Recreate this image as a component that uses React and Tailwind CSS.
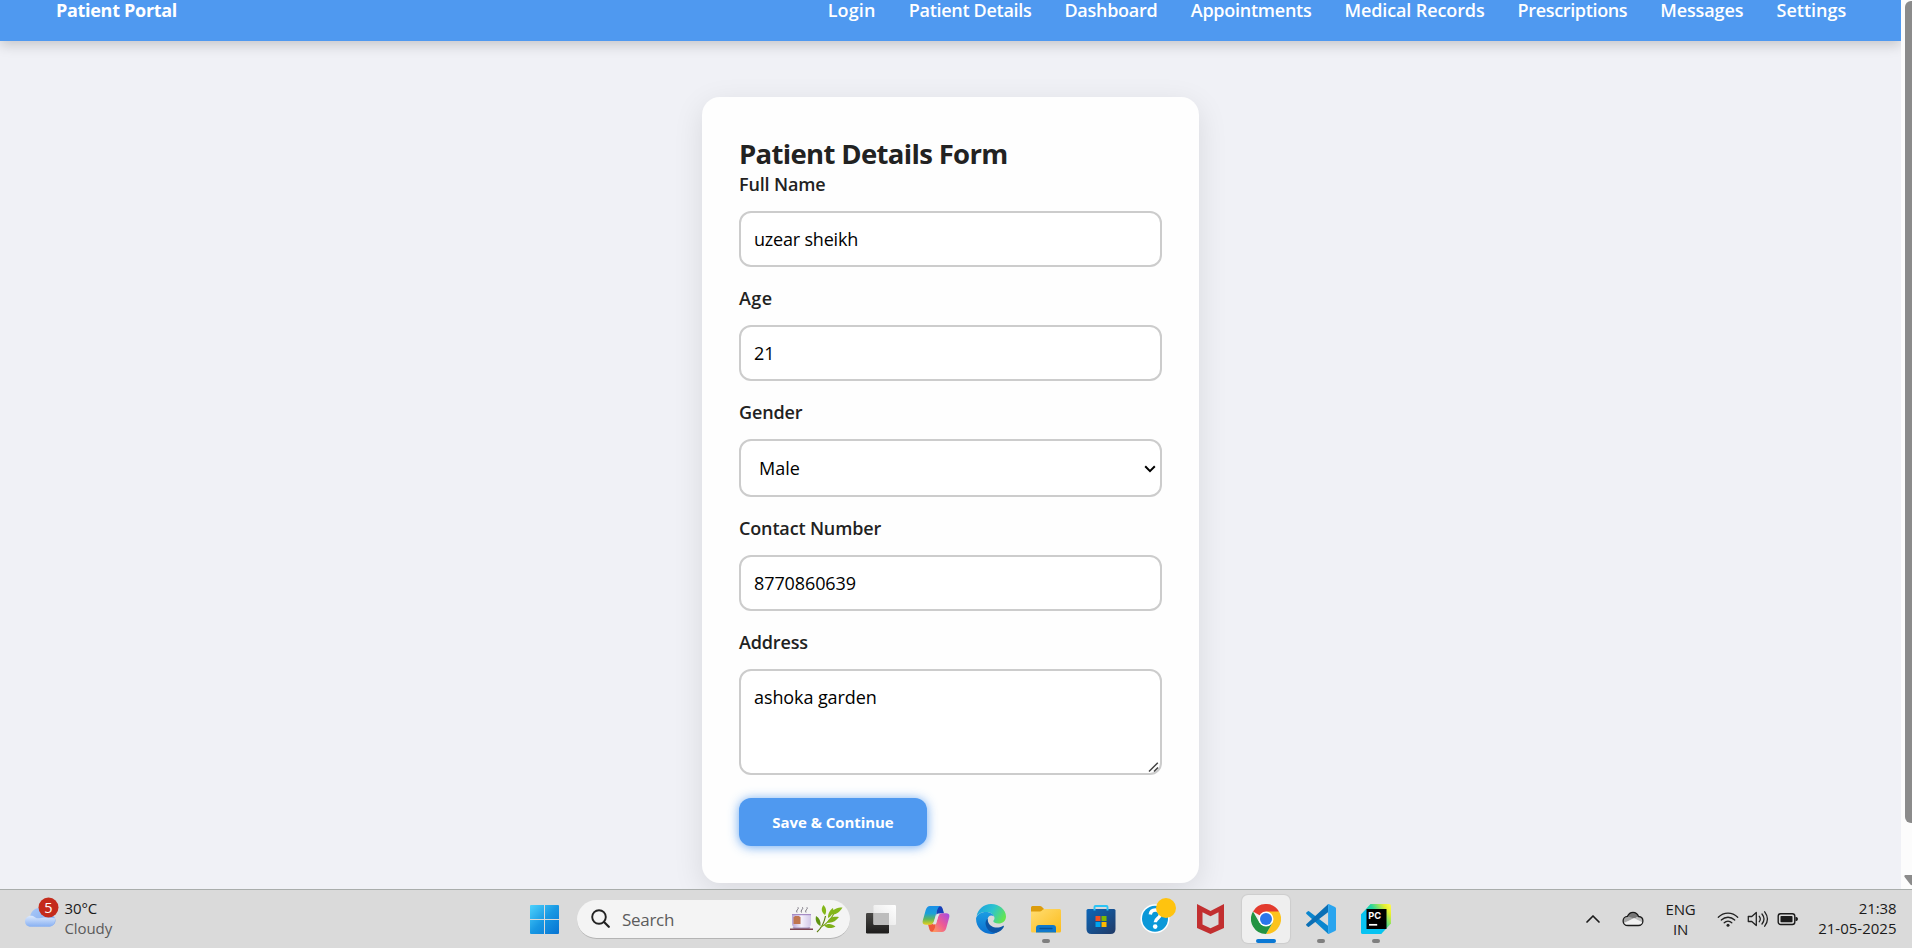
const LINKS = [
  ["Login", "w-[48.1px] tracking-[0.15px]"],
  ["Patient Details", "w-[122.7px] tracking-[-0.3px]"],
  ["Dashboard", "w-[93.3px] tracking-[-0.28px]"],
  ["Appointments", "w-[120.7px] tracking-[-0.25px]"],
  ["Medical Records", "w-[140.2px] tracking-[-0.11px]"],
  ["Prescriptions", "w-[109.6px] tracking-[-0.35px]"],
  ["Messages", "w-[83.3px] tracking-[-0.12px]"],
  ["Settings", "w-[69.5px]"],
];

function Header() {
  return (
    <header className="relative flex h-[41px] shrink-0 items-start justify-between bg-[#4f99f0] pl-[56px] pr-[55px] text-lg leading-5 text-white shadow-[0_4px_12px_rgba(0,0,0,0.18)]">
      <div className="font-bold leading-5 tracking-[-0.3px]">Patient Portal</div>
      <nav className="flex gap-[33px] font-semibold">
        {LINKS.map(([label, cls]) => (
          <a key={label} className={"block whitespace-nowrap leading-5 " + cls}>
            {label}
          </a>
        ))}
      </nav>
    </header>
  );
}

function Label({ className = "", children }) {
  return (
    <label className={"block text-lg font-semibold leading-6 text-[#222] tracking-[-0.15px] " + className}>
      {children}
    </label>
  );
}

const FIELD = "mt-[15px] block w-full rounded-xl border-2 border-[#ccc] bg-white text-lg leading-6 text-black outline-none ";

function PatientForm() {
  return (
    <form className="mx-auto mt-14 h-[786px] w-[497px] rounded-[18px] bg-[#fefefe] px-[37px] pt-[37px] shadow-[0_8px_30px_rgba(0,0,0,0.1)]">
      <h2 className="whitespace-nowrap pt-px text-[27.5px] font-bold leading-[37px] tracking-[-0.67px] text-[#222]">
        Patient Details Form
      </h2>
      <Label>Full Name</Label>
      <input className={FIELD + "h-14 px-[13px] tracking-[-0.2px]"} defaultValue="uzear sheikh" />
      <Label className="mt-[19px]">
        <span className="tracking-[0.4px]">Age</span>
      </Label>
      <input className={FIELD + "h-14 px-[13px]"} defaultValue="21" />
      <Label className="mt-[19px]">Gender</Label>
      <div className="relative">
        <select className={FIELD + "h-[58px] appearance-none px-[18px]"} defaultValue="Male">
          <option>Male</option>
          <option>Female</option>
        </select>
        <svg className="absolute right-[6px] top-[25px] h-2.5 w-3" viewBox="0 0 12 10" fill="none" stroke="#000" strokeWidth="2">
          <path d="M1.2 2.3 6 7.1l4.8-4.8" />
        </svg>
      </div>
      <Label className="mt-[19px]">Contact Number</Label>
      <input className={FIELD + "h-14 px-[13px] tracking-[-0.1px]"} defaultValue="8770860639" />
      <Label className="mt-[19px]">Address</Label>
      <div className="relative">
        <textarea className={FIELD + "h-[106px] resize-none px-[13px] pt-[14px] tracking-[-0.1px]"} defaultValue="ashoka garden" />
        <svg className="absolute bottom-[2px] right-[3px] h-3 w-3" viewBox="0 0 12 12" fill="none" stroke="#444" strokeWidth="1.5">
          <path d="M2 10.500 10.800 1.700M7 10.500l4-4" />
        </svg>
      </div>
      <button
        type="button"
        className="mt-[23px] block h-12 w-[188px] rounded-xl bg-[#4f99f0] text-[15px] font-bold tracking-[-0.05px] text-white shadow-[0_1px_11px_rgba(79,153,240,0.85)]"
      >
        Save &amp; Continue
      </button>
    </form>
  );
}

function Scrollbar() {
  return (
    <div className="flex w-[11px] shrink-0 flex-col justify-between overflow-hidden bg-[#fcfcfc] pl-1">
      <div className="mt-px h-[822px] w-3.5 rounded-[6px] bg-[#8b8b8b]" />
      <svg className="-ml-px mb-[3px] h-[11px] w-4 shrink-0" viewBox="0 0 16 11" fill="#8b8b8b">
        <path d="M1.2 0h13.6q1.4.6.6 2L9.6 9.6q-1.6 1.4-3.2 0L.6 2Q-.2.6 1.2 0Z" />
      </svg>
    </div>
  );
}

function WeatherIcon() {
  return (
    <svg className="-mt-[3.5px] h-[34px] w-9" viewBox="0 0 36 34">
      <defs>
        <linearGradient id="wc" x1="0" y1="0" x2="0" y2="1">
          <stop offset="0" stopColor="#dce9fd" />
          <stop offset="1" stopColor="#86aff2" />
        </linearGradient>
        <linearGradient id="wb" x1="0" y1="0" x2="1" y2="1">
          <stop offset="0" stopColor="#a9c8f8" />
          <stop offset="1" stopColor="#7fa8ee" />
        </linearGradient>
      </defs>
      <path d="M6 22C6 15 10 11 15.500 11s8 3 9 6c4 0 7 3 7 6.500S29 29 25.500 29H10Z" fill="url(#wb)" />
      <path d="M7 29.800c-4 0-6-2.500-6-5.500s2.400-5.500 6-5.500c1.400 0 2.600.5 3.600 1.300 1.600 1.300 3 1.500 6.400.9 5-.9 9-.5 14 .2.600 5-2.400 8.600-6.500 8.600Z" fill="url(#wc)" />
      <circle cx="24.500" cy="10.500" r="10" fill="#c42b1c" />
      <text x="24.500" y="15.700" textAnchor="middle" fontSize="14.500" fill="#fff" fontFamily="Open Sans, sans-serif">5</text>
    </svg>
  );
}

function StartIcon() {
  return (
    <svg className="h-[29px] w-[29px]" viewBox="0 0 29 29">
      <defs>
        <linearGradient id="win" x1="0" y1="0" x2="29" y2="29" gradientUnits="userSpaceOnUse">
          <stop offset="0" stopColor="#4dd2fc" />
          <stop offset=".5" stopColor="#1898e3" />
          <stop offset="1" stopColor="#0873d2" />
        </linearGradient>
      </defs>
      <path d="M1 0h13v14H0V1Q0 0 1 0ZM15 0h13q1 0 1 1v13H15ZM0 15h14v14H1q-1 0-1-1ZM15 15h14v13q0 1-1 1H15Z" fill="url(#win)" />
    </svg>
  );
}

function TeaArt() {
  return (
    <svg className="h-7 w-[53px]" viewBox="0 0 53 28">
      <defs>
        <linearGradient id="cup" x1="0" y1="0" x2="1" y2="0">
          <stop offset="0" stopColor="#b9a6d6" />
          <stop offset=".5" stopColor="#f4f0fb" />
          <stop offset="1" stopColor="#d2c7e8" />
        </linearGradient>
      </defs>
      <path d="M7 7.500q-1-1.500.4-2.800T8 2.300M11.500 7.500q-1-1.500.4-2.800t.6-2.400M16 7.500q-1-1.500.4-2.800t.6-2.400" stroke="#77727e" strokeWidth="1" fill="none" />
      <ellipse cx="11.500" cy="23" rx="9" ry="1.600" fill="#a492bd" />
      <path d="M2 9h19v9.500q0 4-4 4H6q-4 0-4-4Z" fill="url(#cup)" />
      <path d="M2 9h19v1.200H2Z" fill="#a58cc4" />
      <path d="M3.500 12.500 5 11h4l1.500 1.500V19h-7Z" fill="#c07650" />
      <path d="M0 23.500h23V25H0Z" fill="#7d4452" />
      <path d="M27 27c5-4.500 7-8.500 8.500-16" stroke="#5f7f12" strokeWidth="1.200" fill="none" />
      <path d="M31 22c6-3 10-8 14-15" stroke="#7aa318" strokeWidth="1.100" fill="none" />
      <g fill="#84b71a">
        <path d="M35 10C31 7 31 3 33.500 0c2.800 3 3.500 6.500 1.500 10ZM38 13c0-5 2-8 5-10 1 4-1 8-5 10ZM40 9c3-5 7-6.500 12.500-6.500-3 5-7 8-12.500 6.500Z" />
        <path d="M30.500 21c-4-2-5.500-5.500-4.500-10 3.500 2 5 5.500 4.500 10Z" fill="#5f9410" />
        <path d="M37 17.500c2-5 6-6.500 12-5.500-3 4-7 6.500-12 5.500ZM34 20.500c4-2.500 8-2 11.500 1-4.500 2.500-8.500 2-11.500-1Z" fill="#7fb019" />
      </g>
    </svg>
  );
}

function TaskViewIcon() {
  return (
    <svg className="h-[29px] w-[30px]" viewBox="0 0 30 29">
      <defs>
        <linearGradient id="tv" x1="0" y1="0" x2="0" y2="1">
          <stop offset="0" stopColor="#484745" />
          <stop offset="1" stopColor="#1d1c1b" />
        </linearGradient>
        <linearGradient id="tw" x1="1" y1="0" x2="0" y2="1">
          <stop offset="0" stopColor="#fff" />
          <stop offset="1" stopColor="#e3e3e3" />
        </linearGradient>
      </defs>
      <rect y="8" width="23" height="20.500" rx="1.200" fill="url(#tv)" />
      <rect x="7.500" y="0" width="22.500" height="20" rx="1.200" fill="url(#tw)" />
      <path d="M7.500 8H23v12H8.700q-1.200 0-1.200-1.200Z" fill="#bdbdbd" />
    </svg>
  );
}

function CopilotIcon() {
  return (
    <svg className="h-7 w-7" viewBox="0 0 28 28">
      <defs>
        <linearGradient id="ca" x1="0" y1="0" x2="0" y2="1">
          <stop offset="0" stopColor="#1a8fe8" />
          <stop offset=".4" stopColor="#1ba0d8" />
          <stop offset=".7" stopColor="#5fb75c" />
          <stop offset="1" stopColor="#e8cf1c" />
        </linearGradient>
        <linearGradient id="cb" x1="1" y1="0" x2="0" y2="1">
          <stop offset="0" stopColor="#a04be8" />
          <stop offset=".5" stopColor="#ee5a94" />
          <stop offset="1" stopColor="#ffa25a" />
        </linearGradient>
      </defs>
      <path d="M14 1h3.500q2.300 0 3 2.300L22 8.200h-3.500q-3 0-4 3.300Z" fill="#163fb8" />
      <path d="M14 27h-3.500q-2.300 0-3-2.300L6 19.200h3.500q3 0 4-3Z" fill="#f0593a" />
      <path d="M8 1h10q-2 1-3 4.500L12 16q-1 3.700-4.500 3.700H3.800q-4 0-3-4.200L3.800 4.800Q5 1 8 1Z" fill="url(#ca)" />
      <path d="M20 27H10q2-1 3-4.500l3-10.600q1-3.700 4.500-3.700h3.700q4 0 3 4.200l-3 10.800Q23 27 20 27Z" fill="url(#cb)" />
      <path d="m14.600 9 2.600-.6-3.400 10.800-2.800.4Z" fill="#e2e6e8" />
    </svg>
  );
}

function EdgeIcon() {
  return (
    <svg className="h-[30px] w-[30px]" viewBox="0 0 30 30">
      <defs>
        <linearGradient id="ea" x1="0" y1=".2" x2="1" y2=".6">
          <stop offset="0" stopColor="#1ba1e0" />
          <stop offset=".5" stopColor="#2cc3cf" />
          <stop offset="1" stopColor="#66e64e" />
        </linearGradient>
        <linearGradient id="eb" x1="0" y1="0" x2="0" y2="1">
          <stop offset="0" stopColor="#1b9de2" />
          <stop offset="1" stopColor="#0b6fd0" />
        </linearGradient>
      </defs>
      <path d="M.6 12C2 5 7.800 0 15 0c8.500 0 15 6 15 12.500 0 4.500-3.500 7-7.500 7-3 0-5.200-1.200-5.200-2.300 0-.8 1.200-1.200 1.200-3.200C18.500 11 15 8 10 8 6 8 2.500 9.500.6 12Z" fill="url(#ea)" />
      <path d="M.1 14C1.300 10.200 5.200 8 10 8c4.200 0 7.300 2.200 8.200 4.500-3.500-2.300-6.700-.2-6.700 3.500 0 6 5 12.500 10 12.200C19 29.500 17 30 15 30 6 30-.5 22.500.1 14Z" fill="url(#eb)" />
      <path d="M11.800 14.500C9.500 16.500 9 19 10 22c1.600 4.600 6 7.500 10.500 6.700 3.500-1.200 6-3.200 7.300-5.800.4-.8-.3-1.300-1-.9-5.800 3-12.800 1.500-14.800-4.500-.3-1-.4-2-.2-3Z" fill="#0d55a5" />
    </svg>
  );
}

function FolderIcon() {
  return (
    <svg className="h-[27px] w-[30px]" viewBox="0 0 30 27">
      <defs>
        <linearGradient id="fo" x1="0" y1="0" x2="1" y2="1">
          <stop offset="0" stopColor="#ffdd72" />
          <stop offset="1" stopColor="#fcbc1c" />
        </linearGradient>
      </defs>
      <path d="M0 6V1.500Q0 0 1.500 0H9q1 0 1.800.8L13 3v3Z" fill="#dc9c0c" />
      <path d="M0 5.500h9q1 0 1.700-.8L12 3.500q.6-.5 1.500-.5h15Q30 3 30 4.500V25q0 1.500-1.500 1.500h-27Q0 26.500 0 25Z" fill="url(#fo)" />
      <path d="M5 26.500V22q0-3 3-3h14q3 0 3 3v4.500Z" fill="#0f79cc" />
      <path d="M9 22.500h12" stroke="#0a5297" strokeWidth="1.300" strokeLinecap="round" />
    </svg>
  );
}

function StoreIcon() {
  return (
    <svg className="h-[30px] w-[30px]" viewBox="0 0 30 30">
      <defs>
        <linearGradient id="st" x1="0" y1="0" x2="1" y2="1">
          <stop offset="0" stopColor="#0c66b8" />
          <stop offset="1" stopColor="#213a66" />
        </linearGradient>
      </defs>
      <path d="M8.500 6V3Q8.500 2 9.500 2h11q1 0 1 1v3" stroke="#2cc4f5" strokeWidth="1.900" fill="none" />
      <path d="M.5 6.500Q.5 5 2 5h26q1.500 0 1.500 1.500V25q0 5-5 5h-19q-5 0-5-5Z" fill="url(#st)" />
      <path d="M7.500 5h2v1.500h-2ZM20.500 5h2v1.500h-2Z" fill="#2cc4f5" />
      <path d="M9.500 12h5v5h-5Z" fill="#f25022" />
      <path d="M15.500 12h5v5h-5Z" fill="#7fba00" />
      <path d="M9.500 18h5v5h-5Z" fill="#00a4ef" />
      <path d="M15.500 18h5v5h-5Z" fill="#ffb900" />
    </svg>
  );
}

function HelpIcon() {
  return (
    <svg className="-mr-[5px] -mt-[6px] h-9 w-9 shrink-0" viewBox="0 0 36 36">
      <circle cx="15" cy="20.800" r="14.500" fill="#fff" />
      <circle cx="15" cy="20.800" r="13" fill="#0b98d8" />
      <path d="M10.300 16.500c.3-3 2.300-4.500 5-4.500 3 0 5 1.700 5 4.300 0 4.300-5 4-5 8" stroke="#fff" strokeWidth="3.400" fill="none" />
      <circle cx="15.200" cy="28.600" r="2.300" fill="#fff" />
      <circle cx="26" cy="10" r="10" fill="#ffc30f" />
    </svg>
  );
}

function McAfeeIcon() {
  return (
    <svg className="h-[30px] w-[27px]" viewBox="0 0 27 30">
      <path d="m0 0 13.500 7L27 0v24l-13.500 6L0 24Zm5.500 8.200v12.300l8 3.700 8-3.700V8.200l-8 4Z" fill="#c22f30" fillRule="evenodd" />
    </svg>
  );
}

function ChromeIcon() {
  return (
    <svg className="h-[30px] w-[30px]" viewBox="0 0 30 30">
      <path d="M15 15 2 7.500A15 15 0 0 1 28 7.500Z" fill="#e33b2e" />
      <path d="M15 7.500h13A15 15 0 0 1 15 30l6.500-11.200Z" fill="#fcc31e" />
      <path d="M8.500 18.800 2 7.500A15 15 0 0 0 15 30l6.500-11.200Z" fill="#229342" />
      <circle cx="15" cy="15" r="7.500" fill="#fff" />
      <circle cx="15" cy="15" r="6" fill="#2a76ea" />
    </svg>
  );
}

function VSCodeIcon() {
  return (
    <svg className="h-[30px] w-[30px]" viewBox="0 0 30 30">
      <path d="M3 7.300q-.7-.5-1.400.1L.4 8.600q-.7.700.1 1.300L22 29.700V21.800Z" fill="#0a86cf" />
      <path d="M3 22.700q-.7.500-1.400-.1L.4 21.400q-.7-.7.100-1.300L22 .3V8.200Z" fill="#0b6fb5" />
      <path d="M21.500.3q.9-.5 1.700-.1L29 3q1 .5 1 1.600v20.800q0 1.100-1 1.600l-5.800 2.800q-1 .4-1.700-.2.600.2.600-.8V1.200q0-.9-.6-.9Z" fill="#2aa5ef" />
    </svg>
  );
}

function PyCharmIcon() {
  return (
    <svg className="h-[30px] w-[30px]" viewBox="0 0 30 30">
      <defs>
        <linearGradient id="py" x1="0.100" y1=".7" x2="1" y2="0.100">
          <stop offset="0" stopColor="#07c3f2" />
          <stop offset=".5" stopColor="#24d5a0" />
          <stop offset=".85" stopColor="#e4ee30" />
          <stop offset="1" stopColor="#fcf84a" />
        </linearGradient>
      </defs>
      <path d="M9.500 0H28q2 0 2 2v17.500L20 30H2q-2 0-2-2V10.500Z" fill="url(#py)" />
      <path d="M0 10.500 6 5v20h18.500L20 30H2q-2 0-2-2Z" fill="#07c3f2" />
      <path d="M5.500 5h20v20h-20Z" fill="#000" />
      <path d="M8 20.800h8.200" stroke="#fff" strokeWidth="1.700" />
      <text x="7.300" y="14.800" fontSize="9.300" fontWeight="700" fill="#fff" fontFamily="Inter, sans-serif">PC</text>
    </svg>
  );
}

const APPS = [
  { Icon: TaskViewIcon },
  { Icon: CopilotIcon },
  { Icon: EdgeIcon },
  { Icon: FolderIcon, open: true },
  { Icon: StoreIcon },
  { Icon: HelpIcon },
  { Icon: McAfeeIcon },
  { Icon: ChromeIcon, active: true },
  { Icon: VSCodeIcon, open: true },
  { Icon: PyCharmIcon, open: true },
];

function AppButton({ Icon, open, active }) {
  return (
    <div className="flex w-[55px] justify-center">
      <div
        className={
          "relative flex h-12 w-12 items-center justify-center rounded-md " +
          (active ? "bg-[#efefef] shadow-[0_0_1px_1px_rgba(0,0,0,0.06)]" : "")
        }
      >
        <Icon />
        {open && <span className="absolute bottom-0 left-5 h-1 w-2 rounded-full bg-[#7f7f7f]" />}
        {active && <span className="absolute bottom-0 left-[14px] h-1 w-5 rounded-full bg-[#0a78d4]" />}
      </div>
    </div>
  );
}

function Tray() {
  return (
    <div className="ml-auto flex items-center text-[15px] leading-5 text-[#1b1b1b]">
      <svg className="-mt-px h-5 w-4" viewBox="0 0 16 20" fill="none" stroke="#1b1b1b" strokeWidth="1.700" strokeLinecap="round" strokeLinejoin="round">
        <path d="M2 13 8 7l6 6" />
      </svg>
      <svg className="ml-[21px] -mt-px h-5 w-[22px]" viewBox="0 0 22 20">
        <path d="M5.300 7.500C6.500 4.800 8.500 3.300 11 3.300s4.500 1.500 5.700 4l-6 3.500Z" fill="#777" />
        <path d="M5.500 7.300C3 7.300 1.200 9.300 1.200 11.800q0 1 .4 2l10.500-4.200Z" fill="#a6a6a6" />
        <path d="M16.500 7.500 12 9.500l8.500 4Q21 8 16.500 7.500Z" fill="#bdbdbd" />
        <path d="M2 14.500 12 9l8.500 4.500q-1 3-4 3H6q-3 0-4-2Z" fill="#f1f1f1" />
        <path d="M6 16.500c-3 0-4.900-2-4.900-4.600s2-4.500 4.400-4.600C6.600 4.800 8.500 3.300 11 3.300s4.600 1.600 5.500 4.200c2.600.2 4.400 2 4.400 4.500s-2 4.500-4.600 4.500Z" fill="none" stroke="#1b1b1b" strokeWidth="1.300" />
      </svg>
      <div className="ml-[15px] w-[44px] text-center tracking-[-0.2px]">
        <div>ENG</div>
        <div>IN</div>
      </div>
      <svg className="ml-[14px] h-5 w-[22px]" viewBox="0 0 22 20" fill="none" stroke="#222" strokeWidth="1.300" strokeLinecap="round">
        <path d="M1.300 8.200c5.500-5.400 13.900-5.400 19.400 0" />
        <path d="M4.300 11c3.900-3.700 9.500-3.700 13.400 0" />
        <path d="M7.200 13.800c2.200-2.100 5.400-2.100 7.600 0" />
        <circle cx="11" cy="16.300" r="1.500" fill="#222" stroke="none" />
      </svg>
      <svg className="ml-2 h-5 w-[22px]" viewBox="0 0 22 20" fill="none" stroke="#222" strokeWidth="1.300" strokeLinecap="round" strokeLinejoin="round">
        <path d="M1.300 7.500h3.500l4.500-4v13l-4.500-4H1.300Z" />
        <path d="M12.300 7.300q2 2.700 0 5.400M15 5q4 5 0 10M17.700 2.800q5.500 7.200 0 14.400" />
      </svg>
      <svg className="ml-2 h-5 w-[22px]" viewBox="0 0 22 20">
        <rect x="1.200" y="4.700" width="16.600" height="10.800" rx="2.500" fill="none" stroke="#1b1b1b" strokeWidth="1.400" />
        <rect x="3.500" y="7" width="12" height="6.200" rx=".8" fill="#1b1b1b" />
        <path d="M18.500 8h1q1.500.3 1.500 2t-1.500 2h-1Z" fill="#1b1b1b" />
      </svg>
      <div className="-mt-0.5 ml-[17px] mr-[15.5px] w-[81px] text-right">
        <div className="tracking-[-0.1px]">21:38</div>
        <div>21-05-2025</div>
      </div>
    </div>
  );
}

function Taskbar() {
  return (
    <footer className="relative flex h-[59px] shrink-0 items-center border-t border-[#a9adab] bg-[#dadada]">
      <div className="flex w-[517px] shrink-0 items-start pl-6 text-[15px] leading-5">
        <WeatherIcon />
        <div className="-mt-0.5 ml-[4.5px] tracking-[-0.1px]">
          <div className="text-[#1b1b1b]">30°C</div>
          <div className="text-[#5a5a5a]">Cloudy</div>
        </div>
      </div>
      <div className="flex w-[55px] justify-center">
        <StartIcon />
      </div>
      <div className="ml-[5px] mr-[3px] flex h-[39px] w-[273px] items-center rounded-full border-b border-[#b4b4b4] bg-[#f4f4f4] pl-[14px] pr-[7px]">
        <svg className="h-[19px] w-[19px]" viewBox="0 0 19 19" fill="none" stroke="#222" strokeWidth="1.900" strokeLinecap="round">
          <circle cx="8" cy="8" r="6.800" />
          <path d="m13 13 4.800 4.800" strokeWidth="2.200" />
        </svg>
        <span className="ml-3 mr-auto pt-0.5 text-[17px] leading-6 tracking-[-0.3px] text-[#5c5c5c]">Search</span>
        <TeaArt />
      </div>
      {APPS.map((app, i) => (
        <AppButton key={i} {...app} />
      ))}
      <Tray />
    </footer>
  );
}

export default function App() {
  return (
    <div className="flex h-[948px] w-[1912px] flex-col overflow-hidden font-['Open_Sans','Noto_Sans',sans-serif]">
      <div className="flex h-[889px] shrink-0">
        <main className="flex-1 overflow-hidden bg-[#f0f1f6]">
          <Header />
          <PatientForm />
        </main>
        <Scrollbar />
      </div>
      <Taskbar />
    </div>
  );
}
